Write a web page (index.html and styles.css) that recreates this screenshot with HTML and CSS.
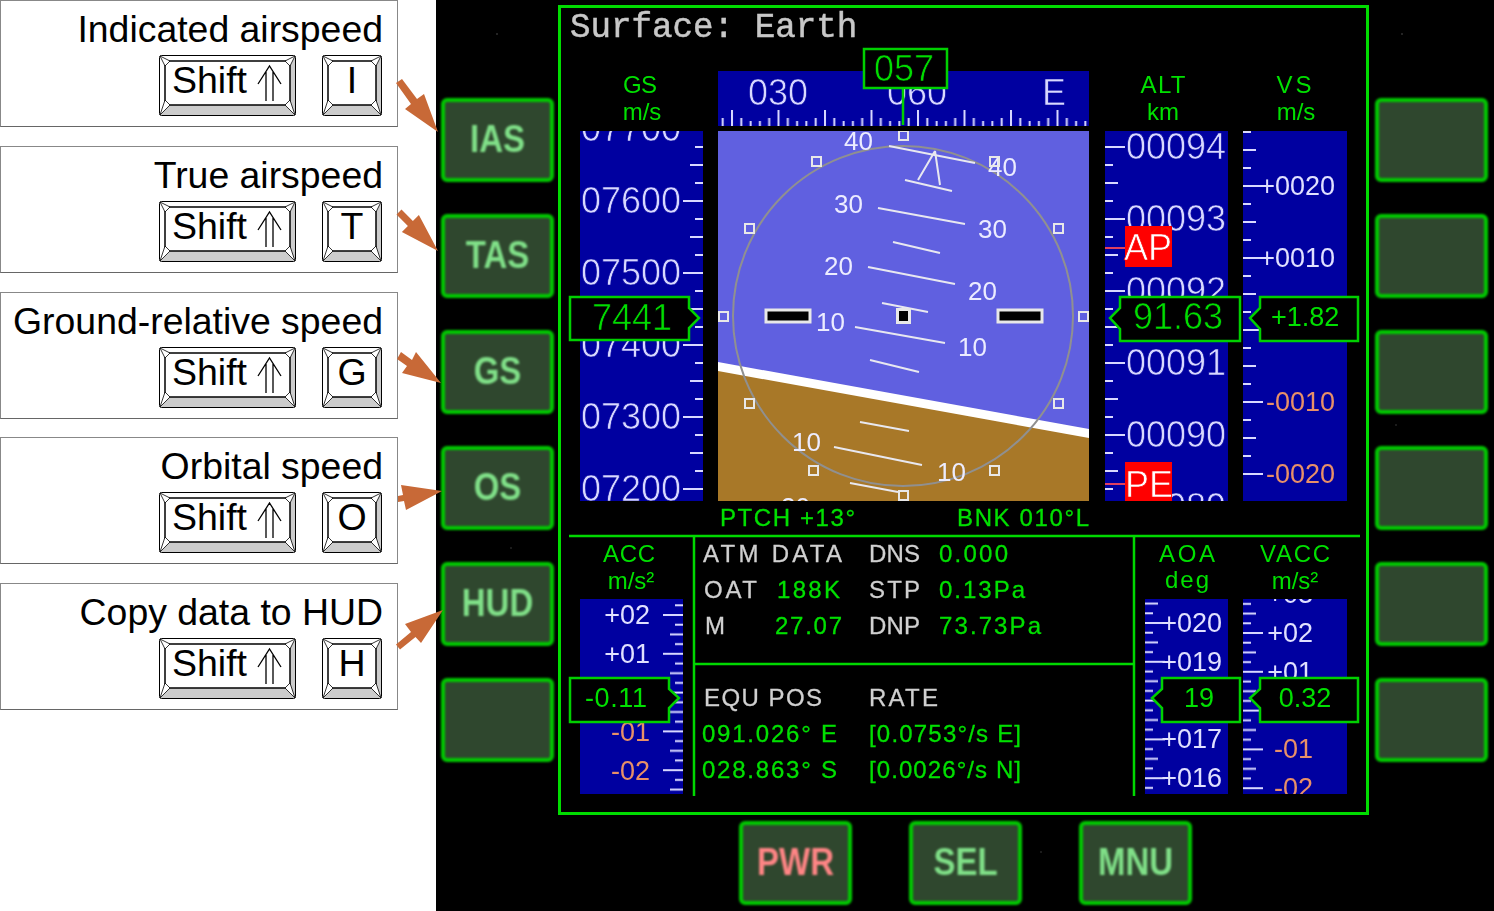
FILE: index.html
```html
<!DOCTYPE html>
<html>
<head>
<title>Surface MFD mode controls</title>
<link rel="stylesheet" href="styles.css">
</head>
<body>
<svg class="defs" width="0" height="0">
  <symbol id="key-wide" viewBox="0 0 137 61">
    <rect class="key-edge" x="0.5" y="0.5" width="136" height="60" rx="2"/>
    <path class="key-shade" d="M136 1V60H1L6 50H131V6Z"/>
    <rect class="key-cap" x="6" y="6" width="125" height="44" rx="4"/>
    <path class="key-corner" d="M1 1L11 6L6 11ZM136 1L126 6L131 11ZM1 60L11 50L6 45ZM136 60L126 50L131 45Z"/>
    <path class="key-arrow" d="M99 29L110.500 11L122 29M107 17V46M114 17V46"/>
  </symbol>
  <symbol id="key-small" viewBox="0 0 60 61">
    <rect class="key-edge" x="0.5" y="0.5" width="59" height="60" rx="2"/>
    <path class="key-shade" d="M59 1V60H1L6 50H54V6Z"/>
    <rect class="key-cap" x="6" y="6" width="48" height="44" rx="4"/>
    <path class="key-corner" d="M1 1L11 6L6 11ZM59 1L49 6L54 11ZM1 60L11 50L6 45ZM59 60L49 50L54 45Z"/>
  </symbol>
  <pattern id="ticks-72" patternUnits="userSpaceOnUse" y="-1" width="22" height="72">
    <rect width="20" height="2"/>
    <rect y="18" width="8" height="2"/>
    <rect y="36" width="13" height="2"/>
    <rect y="54" width="8" height="2"/>
  </pattern>
  <pattern id="ticks-39" patternUnits="userSpaceOnUse" y="-1" width="22" height="38.800">
    <rect width="20" height="2"/>
    <rect y="9.700" width="8" height="2"/>
    <rect y="19.400" width="13" height="2"/>
    <rect y="29.100" width="8" height="2"/>
  </pattern>
  <pattern id="ticks-hdg" patternUnits="userSpaceOnUse" x="-1" width="46.500" height="16">
    <rect y="0" width="2" height="16"/>
    <rect x="9.300" y="8" width="2" height="8"/>
    <rect x="18.600" y="11" width="2" height="5"/>
    <rect x="27.900" y="11" width="2" height="5"/>
    <rect x="37.200" y="8" width="2" height="8"/>
  </pattern>
</svg>

<div class="page">
  <div class="legend">
    <div class="card">
      <div class="card-title">Indicated airspeed</div>
      <div class="keys">
        <svg class="key key-shift" viewBox="0 0 137 61"><use href="#key-wide"/><text x="13" y="38">Shift</text></svg>
        <svg class="key" viewBox="0 0 60 61"><use href="#key-small"/><text x="30" y="38" text-anchor="middle">I</text></svg>
      </div>
    </div>
    <div class="card">
      <div class="card-title">True airspeed</div>
      <div class="keys">
        <svg class="key key-shift" viewBox="0 0 137 61"><use href="#key-wide"/><text x="13" y="38">Shift</text></svg>
        <svg class="key" viewBox="0 0 60 61"><use href="#key-small"/><text x="30" y="38" text-anchor="middle">T</text></svg>
      </div>
    </div>
    <div class="card">
      <div class="card-title">Ground-relative speed</div>
      <div class="keys">
        <svg class="key key-shift" viewBox="0 0 137 61"><use href="#key-wide"/><text x="13" y="38">Shift</text></svg>
        <svg class="key" viewBox="0 0 60 61"><use href="#key-small"/><text x="30" y="38" text-anchor="middle">G</text></svg>
      </div>
    </div>
    <div class="card">
      <div class="card-title">Orbital speed</div>
      <div class="keys">
        <svg class="key key-shift" viewBox="0 0 137 61"><use href="#key-wide"/><text x="13" y="38">Shift</text></svg>
        <svg class="key" viewBox="0 0 60 61"><use href="#key-small"/><text x="30" y="38" text-anchor="middle">O</text></svg>
      </div>
    </div>
    <div class="card">
      <div class="card-title">Copy data to HUD</div>
      <div class="keys">
        <svg class="key key-shift" viewBox="0 0 137 61"><use href="#key-wide"/><text x="13" y="38">Shift</text></svg>
        <svg class="key" viewBox="0 0 60 61"><use href="#key-small"/><text x="30" y="38" text-anchor="middle">H</text></svg>
      </div>
    </div>
  </div>

  <div class="mfd">
    <div class="softkeys softkeys-left">
      <div class="softkey"><span>IAS</span></div>
      <div class="softkey"><span>TAS</span></div>
      <div class="softkey"><span>GS</span></div>
      <div class="softkey"><span>OS</span></div>
      <div class="softkey"><span>HUD</span></div>
      <div class="softkey"></div>
    </div>

    <div class="center">
      <div class="screen">
        <svg class="display" viewBox="561 8 805 804" width="805" height="804">
          <text class="title" x="570" y="37">Surface: Earth</text>

          <!-- column headings -->
          <g class="head">
            <text x="640" y="93" textLength="34">GS</text>
            <text x="642" y="120">m/s</text>
            <text x="1163" y="93" textLength="45">ALT</text>
            <text x="1163" y="120">km</text>
            <text x="1294" y="93" textLength="35">VS</text>
            <text x="1296" y="120">m/s</text>
            <text x="629" y="562" textLength="52">ACC</text>
            <text x="631" y="589">m/s²</text>
            <text x="1187" y="562" textLength="56">AOA</text>
            <text x="1187" y="588" textLength="44">deg</text>
            <text x="1295" y="562" textLength="70">VACC</text>
            <text x="1295" y="589">m/s²</text>
          </g>

          <!-- heading tape -->
          <svg x="718" y="71" width="371" height="55" viewBox="718 71 371 55">
            <rect class="tape" x="718" y="71" width="371" height="55"/>
            <rect fill="url(#ticks-hdg)" transform="translate(732,110)" x="-14" y="0" width="371" height="16"/>
            <text class="num-lg mid" x="778" y="105">030</text>
            <text class="num-lg mid" x="917" y="105">060</text>
            <text class="num-lg mid" x="1054" y="105">E</text>
          </svg>

          <!-- attitude indicator -->
          <svg x="718" y="131" width="371" height="370" viewBox="718 131 371 370">
            <rect class="sky" x="718" y="131" width="371" height="370"/>
            <path class="ground" d="M718 369L1089 436V501H718Z"/>
            <path class="horizon" d="M718 362L1089 429V438L718 371Z"/>
            <circle class="ring" cx="903" cy="316" r="170"/>
            <g class="ladder">
              <path d="M889 146L975 163M878 208L965 224M893 242L940 253M868 267L955 284M882 303L928 312M855 327L945 343M870 360L919 372M860 422L909 431M834 447L922 465M850 483L898 492"/>
              <path d="M935 151L918 180M935 151L940 185M905 180L952 191"/>
            </g>
            <g class="ladder-num">
              <text x="844" y="150">40</text><text x="988" y="176">40</text>
              <text x="834" y="213">30</text><text x="978" y="238">30</text>
              <text x="824" y="275">20</text><text x="968" y="300">20</text>
              <text x="816" y="331">10</text><text x="958" y="356">10</text>
              <text x="792" y="451">10</text><text x="937" y="481">10</text>
              <text x="781" y="516">20</text>
            </g>
            <g class="marks">
              <rect x="899" y="131" width="9" height="9"/><rect x="812" y="157" width="9" height="9"/>
              <rect x="745" y="224" width="9" height="9"/><rect x="719" y="312" width="9" height="9"/>
              <rect x="745" y="399" width="9" height="9"/><rect x="809" y="466" width="9" height="9"/>
              <rect x="899" y="491" width="9" height="9"/><rect x="990" y="466" width="9" height="9"/>
              <rect x="1054" y="399" width="9" height="9"/><rect x="1079" y="312" width="9" height="9"/>
              <rect x="1054" y="224" width="9" height="9"/><rect x="990" y="157" width="9" height="9"/>
            </g>
            <g class="aircraft">
              <rect x="766" y="310" width="44" height="12"/>
              <rect x="897.500" y="309.500" width="12" height="13"/>
              <rect x="998" y="310" width="44" height="12"/>
            </g>
          </svg>

          <!-- GS tape -->
          <svg x="580" y="131" width="123" height="370" viewBox="580 131 123 370">
            <rect class="tape" x="580" y="131" width="123" height="370"/>
            <rect fill="url(#ticks-72)" transform="translate(703,201) scale(-1,1)" y="-72" width="22" height="372"/>
            <g class="num-lg">
              <text x="581" y="141">07700</text><text x="581" y="213">07600</text>
              <text x="581" y="285">07500</text><text x="581" y="357">07400</text>
              <text x="581" y="429">07300</text><text x="581" y="501">07200</text>
            </g>
          </svg>

          <!-- ALT tape -->
          <svg x="1105" y="131" width="123" height="370" viewBox="1105 131 123 370">
            <rect class="tape" x="1105" y="131" width="123" height="370"/>
            <rect fill="url(#ticks-72)" transform="translate(1105,147)" y="-18" width="22" height="372"/>
            <g class="num-lg">
              <text x="1126" y="159">00094</text><text x="1126" y="231">00093</text>
              <text x="1126" y="303">00092</text><text x="1126" y="375">00091</text>
              <text x="1126" y="447">00090</text><text x="1126" y="519">00089</text>
            </g>
            <path class="bug-line" d="M1105 248H1125M1105 484H1125"/>
            <rect class="bug" x="1125" y="226" width="47" height="41"/>
            <rect class="bug" x="1125" y="462" width="47" height="39"/>
            <text class="num-lg bug-text" x="1124" y="260">AP</text>
            <text class="num-lg bug-text" x="1125" y="497">PE</text>
          </svg>

          <!-- VS tape -->
          <svg x="1243" y="131" width="104" height="370" viewBox="1243 131 104 370">
            <rect class="tape" x="1243" y="131" width="104" height="370"/>
            <rect fill="url(#ticks-72)" transform="translate(1243,186)" y="-72" width="22" height="372"/>
            <g class="num-sm end">
              <text x="1335" y="195">+0020</text><text x="1335" y="267">+0010</text>
              <text class="neg" x="1335" y="411">-0010</text><text class="neg" x="1335" y="483">-0020</text>
            </g>
          </svg>

          <!-- readout boxes, upper -->
          <path class="box" d="M864 49H947V88H864Z"/>
          <path class="marker" d="M903 88V125"/>
          <text class="num-lg read" x="874" y="81">057</text>
          <path class="box" d="M570 297H689V308L699 318L689 328V340H570Z"/>
          <text class="num-lg read mid" x="632" y="330">7441</text>
          <path class="box" d="M1120 308V297H1240V341H1120V329L1110 318Z"/>
          <text class="num-lg read" x="1133" y="329">91.63</text>
          <path class="box" d="M1260 308V297H1358V341H1260V329L1250 318Z"/>
          <text class="num-sm read" x="1271" y="326">+1.82</text>

          <!-- dividers -->
          <path class="rule" d="M569 536H1360M694 536V796M1134 536V796M694 664H1134"/>
          <g class="data-green">
            <text x="720" y="526" textLength="135">PTCH +13°</text>
            <text x="957" y="526" textLength="132">BNK 010°L</text>
          </g>

          <!-- ACC tape -->
          <svg x="580" y="599" width="103" height="195" viewBox="580 599 103 195">
            <rect class="tape" x="580" y="599" width="103" height="195"/>
            <rect fill="url(#ticks-39)" transform="translate(683,615) scale(-1,1)" y="-39" width="22" height="234"/>
            <g class="num-sm end">
              <text x="650" y="624">+02</text><text x="650" y="663">+01</text>
              <text class="neg" x="650" y="741">-01</text><text class="neg" x="650" y="780">-02</text>
            </g>
          </svg>

          <!-- AOA tape -->
          <svg x="1145" y="599" width="83" height="195" viewBox="1145 599 83 195">
            <rect class="tape" x="1145" y="599" width="83" height="195"/>
            <rect fill="url(#ticks-39)" transform="translate(1145,623)" y="-39" width="22" height="234"/>
            <g class="num-sm end">
              <text x="1222" y="632">+020</text><text x="1222" y="671">+019</text>
              <text x="1222" y="748">+017</text><text x="1222" y="787">+016</text>
            </g>
          </svg>

          <!-- VACC tape -->
          <svg x="1243" y="599" width="104" height="195" viewBox="1243 599 104 195">
            <rect class="tape" x="1243" y="599" width="104" height="195"/>
            <rect fill="url(#ticks-39)" transform="translate(1243,633)" y="-39" width="22" height="234"/>
            <g class="num-sm end">
              <text x="1313" y="603">+03</text><text x="1313" y="642">+02</text><text x="1313" y="681">+01</text>
              <text class="neg" x="1313" y="758">-01</text><text class="neg" x="1313" y="797">-02</text>
            </g>
          </svg>

          <!-- readout boxes, lower -->
          <path class="box" d="M570 678H669V689L679 698L669 708V722H570Z"/>
          <text class="num-sm read mid" x="616" y="707" textLength="62">-0.11</text>
          <path class="box" d="M1162 689V678H1240V722H1162V708L1152 698Z"/>
          <text class="num-sm read mid" x="1199" y="707">19</text>
          <path class="box" d="M1260 689V678H1358V722H1260V708L1250 698Z"/>
          <text class="num-sm read mid" x="1305" y="707">0.32</text>

          <!-- atmosphere data -->
          <g class="data">
            <text x="703" y="562" textLength="139">ATM DATA</text>
            <text x="869" y="562" textLength="51">DNS</text>
            <text x="704" y="598" textLength="53">OAT</text>
            <text x="869" y="598" textLength="51">STP</text>
            <text x="705" y="634">M</text>
            <text x="869" y="634" textLength="51">DNP</text>
            <text x="704" y="706" textLength="118">EQU POS</text>
            <text x="869" y="706" textLength="69">RATE</text>
          </g>
          <g class="data-green">
            <text x="939" y="562" textLength="69">0.000</text>
            <text x="777" y="598" textLength="63">188K</text>
            <text x="939" y="598" textLength="86">0.13Pa</text>
            <text x="775" y="634" textLength="67">27.07</text>
            <text x="939" y="634" textLength="102">73.73Pa</text>
            <text x="702" y="742" textLength="135">091.026° E</text>
            <text x="702" y="778" textLength="135">028.863° S</text>
            <text x="869" y="742" textLength="152">[0.0753°/s E]</text>
            <text x="869" y="778" textLength="152">[0.0026°/s N]</text>
          </g>
        </svg>
      </div>
      <div class="softkeys-bottom">
        <div class="softkey softkey-pwr"><span>PWR</span></div>
        <div class="softkey"><span>SEL</span></div>
        <div class="softkey"><span>MNU</span></div>
      </div>
    </div>

    <div class="softkeys softkeys-right">
      <div class="softkey"></div>
      <div class="softkey"></div>
      <div class="softkey"></div>
      <div class="softkey"></div>
      <div class="softkey"></div>
      <div class="softkey"></div>
    </div>
  </div>

  <svg class="arrows" viewBox="0 0 1494 911" width="1494" height="911">
    <path d="M402 79L417 99L424 94L438 132L405 109L411 104L396 83Z"/>
    <path d="M401.500 209.500L412.900 220.900L418.900 214.900L438 251L401.900 231.900L407.900 225.900L396.500 214.500Z"/>
    <path d="M401 352L412 360L416 352L441 383L402 373L407 366L397 359Z"/>
    <path d="M398 496L403 495L401 485L442 491L406 510L404 501L398 502Z"/>
    <path d="M396 644.500L411 632L405 624L443 610L421 643L415.500 637L400 649.500Z"/>
  </svg>
</div>
</body>
</html>
```

FILE: styles.css
```css
/* MFD key reference */

body
{ margin: 0;
background: #fff;
font-family: "Liberation Sans", Arial, sans-serif;
}

.defs
{ position: absolute;
}

.page
{ position: relative;
display: flex;
width: 1494px;
height: 911px;
overflow: hidden;
}

/* Key legend */

.legend
{ width: 436px;
flex: none;
display: flex;
flex-direction: column;
gap: 18.75px;
}

.card
{ box-sizing: border-box;
width: 398px;
height: 127px;
padding: 6px 14px 0 0;
border: 1px solid #888;
border-bottom-color: #666;
}

.card-title
{ font-size: 37.4px;
line-height: 44px;
text-align: right;
color: #000;
}

.keys
{ display: flex;
justify-content: flex-end;
gap: 26px;
margin-top: 4px;
margin-right: 1px;
}

.key
{ width: 60px;
height: 61px;
display: block;
}

.key-shift
{ width: 137px;
}

.key text
{ font-size: 37.5px;
fill: #000;
}

.key-edge
{ fill: #fff;
stroke: #000;
}

.key-shade
{ fill: #ccc;
}

.key-cap
{ fill: #fff;
stroke: #000;
stroke-width: 1.5;
}

.key-corner
{ fill: #fff;
stroke: #000;
stroke-width: 0.8;
}

.key-arrow
{ fill: none;
stroke: #000;
stroke-width: 1.3;
}

/* MFD shell */

.mfd
{ flex: 1;
display: flex;
background-color: #000;
background-image:
  radial-gradient(circle 1.5px at 61px 34px, #444, transparent),
  radial-gradient(circle 1.5px at 966px 34px, #444, transparent),
  radial-gradient(circle 1.5px at 75px 548px, #333, transparent),
  radial-gradient(circle 1.5px at 605px 852px, #333, transparent),
  radial-gradient(circle 1.5px at 960px 425px, #333, transparent);
}

.softkeys
{ flex: none;
display: flex;
flex-direction: column;
gap: 32px;
margin-top: 98px;
}

.softkeys-left
{ margin-left: 5px;
margin-right: 4px;
}

.softkeys-right
{ margin-left: 6px;
}

.center
{ flex: none;
width: 811px;
}

.softkeys-bottom
{ display: flex;
gap: 57px;
margin-top: 6px;
padding-left: 181px;
}

.softkey
{ box-sizing: border-box;
width: 113px;
height: 84px;
display: flex;
align-items: center;
justify-content: center;
background: #2f472e;
border: 4px solid #00c800;
border-radius: 6px;
color: #80e088;
font-size: 33px;
font-weight: bold;
filter: blur(0.8px);
}

.softkey span
{ margin-bottom: 2px;
transform: scaleY(1.18);
}

.softkey-pwr
{ color: #ff8585;
}

/* Display */

.screen
{ box-sizing: border-box;
width: 811px;
height: 810px;
margin-top: 5px;
border: 3px solid #00dc00;
}

.display
{ display: block;
filter: blur(0.5px);
}

.title
{ font-family: "Liberation Mono", monospace;
font-size: 34.2px;
fill: #c8c8c8;
stroke: #c8c8c8;
stroke-width: 0.5px;
}

.head text
{ font-size: 24px;
text-anchor: middle;
fill: #00e000;
}

.tape
{ fill: #0000a0;
}

pattern rect
{ fill: #d8d8ff;
}

.num-lg, .num-lg text
{ font-size: 36px;
fill: #d8d8ff;
stroke: #0000a0;
stroke-width: 0.7px;
}

.num-sm text, .num-sm
{ font-size: 27px;
fill: #e0e0ff;
}

.mid
{ text-anchor: middle;
}

.end
{ text-anchor: end;
}

.num-sm .neg
{ fill: #e89068;
}

.num-lg.read
{ fill: #00dc00;
stroke: #000;
}

.num-sm.read
{ fill: #00e000;
}

.num-lg.bug-text
{ fill: #fff;
stroke: #f00;
}

.sky
{ fill: #6060e0;
}

.ground
{ fill: #a87828;
}

.horizon
{ fill: #fff;
}

.ring
{ fill: none;
stroke: #909090;
stroke-width: 2;
}

.ladder path
{ fill: none;
stroke: #e8e8f0;
stroke-width: 2;
}

.ladder-num text
{ font-size: 26px;
fill: #ececff;
}

.marks rect
{ fill: none;
stroke: #e8e8e8;
stroke-width: 2;
}

.aircraft rect
{ fill: #000;
stroke: #e8e8e8;
stroke-width: 3;
}

.bug
{ fill: #f00;
}

.bug-line
{ fill: none;
stroke: #e04060;
stroke-width: 2;
}

.box
{ fill: #000;
stroke: #00d000;
stroke-width: 2.5;
}

.marker
{ fill: none;
stroke: #00d000;
stroke-width: 2.5;
}

.rule
{ fill: none;
stroke: #00d800;
stroke-width: 2.5;
}

.data text
{ font-size: 24px;
fill: #d0d0d0;
stroke: #d0d0d0;
stroke-width: 0.3px;
}

.data-green text
{ font-size: 24px;
fill: #00e000;
stroke: #00e000;
stroke-width: 0.3px;
}

/* Callout arrows lie over both panels */

.arrows
{ position: absolute;
left: 0;
top: 0;
pointer-events: none;
}

.arrows path
{ fill: #c86937;
}
```
